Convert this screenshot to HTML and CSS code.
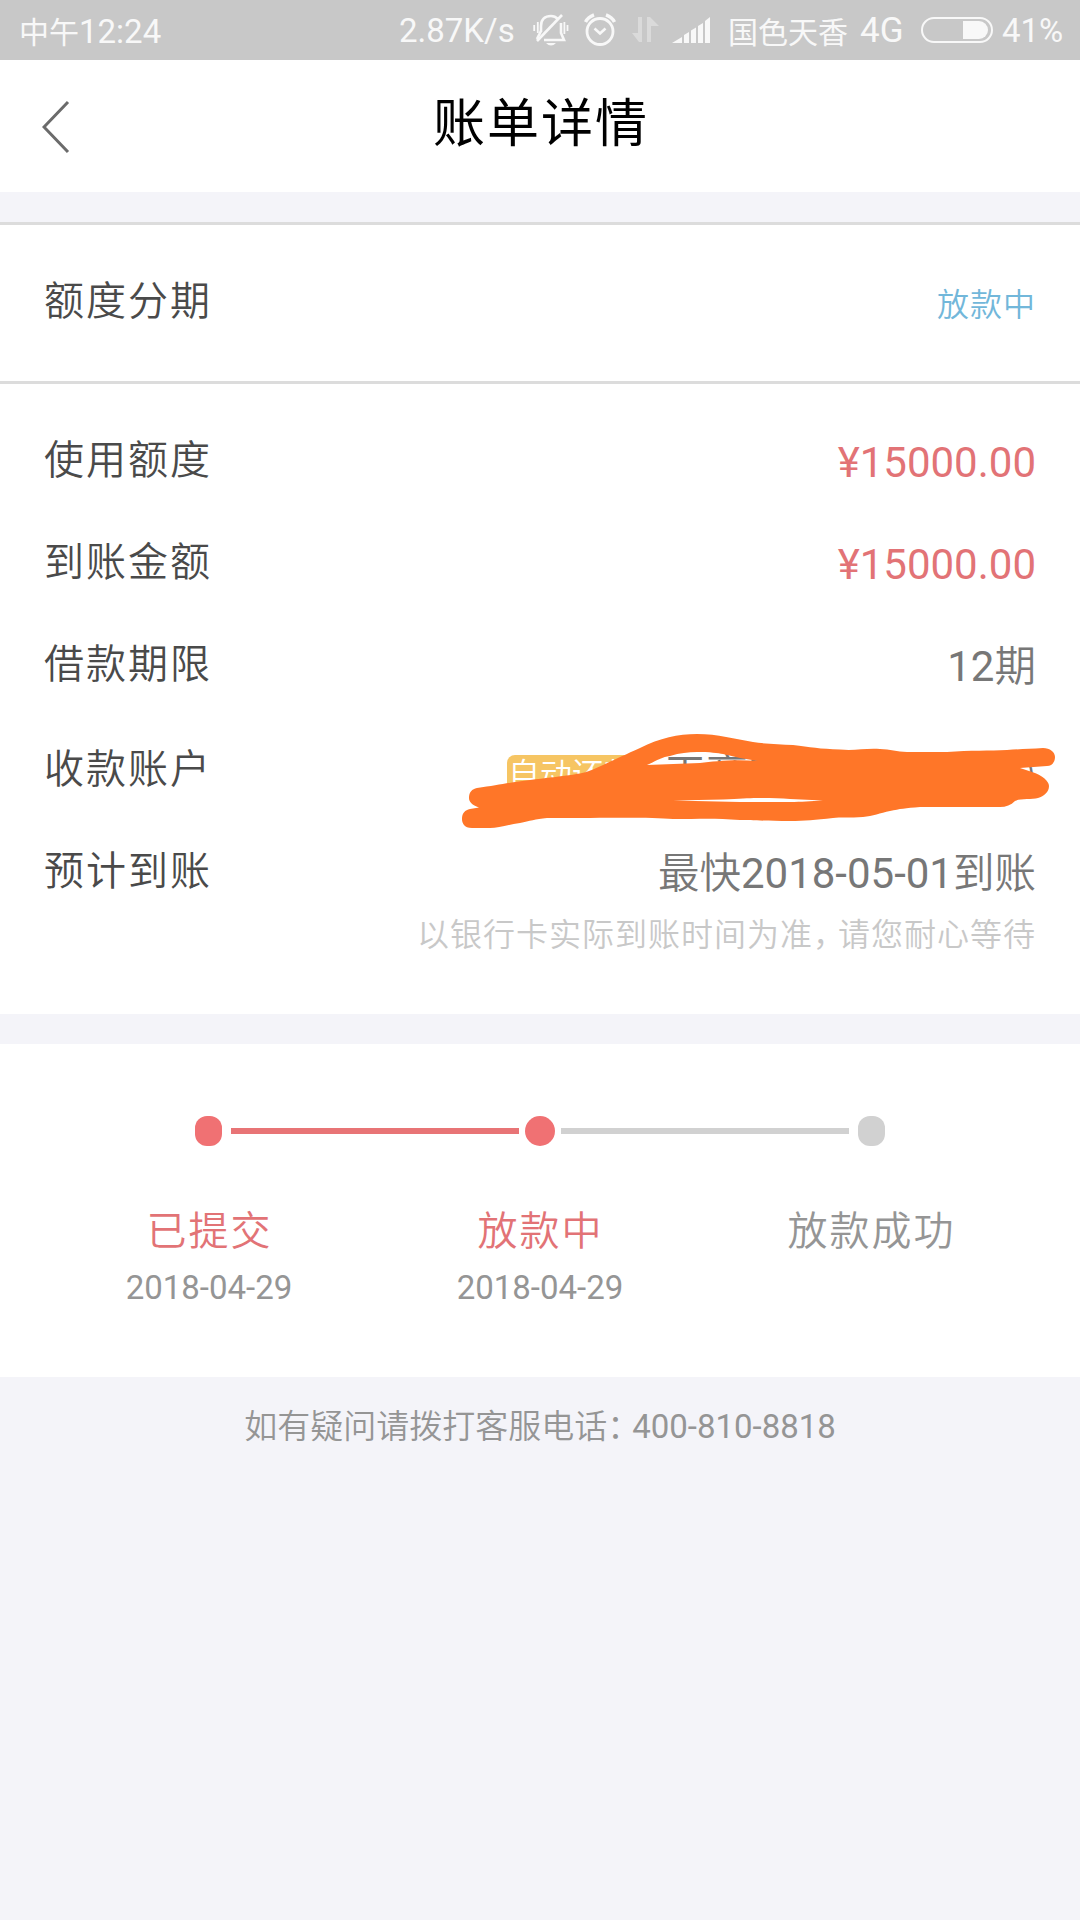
FILE: index.html
```
<!DOCTYPE html>
<html lang="zh-CN">
<head>
  <meta charset="UTF-8">
  <title>账单详情</title>
  <meta name="viewport" content="width=device-width, initial-scale=1.0">
  <link rel="stylesheet" href="styles.css">
</head>
<body>
  <div class="status-bar">
    <span class="time"><span class="cn">中午</span>12:24</span>
    <div class="status-icons">
      <span class="speed">2.87K/s</span>
      <svg class="icon-bell" width="36" height="34" viewBox="0 0 36 34" fill="none" stroke="#f8f8f8" stroke-width="2.6">
        <path d="M8 19V13C8 6 12 3 18 3C21 3 23 4 25 6"/>
        <path d="M28 10V20L31 27H11"/>
        <path d="M4 28L29 2" stroke-width="2.6"/>
        <path d="M8 18L4 26"/>
        <path d="M13 30H23Q18 35 13 30Z" fill="#f8f8f8" stroke="none"/>
        <path d="M1.2 12V18M4.8 9V20M34.5 12V18M31.4 9V21" stroke-width="1.8"/>
      </svg>
      <svg class="icon-alarm" width="32" height="34" viewBox="0 0 32 34" fill="none" stroke="#f8f8f8">
        <circle cx="16" cy="18.5" r="13" stroke-width="2.8"/>
        <path d="M10.5 15.5L16 20.5L21.5 15.5" stroke-width="2.6"/>
        <path d="M1.5 9Q4 4 10 1.8M30.5 9Q28 4 22 1.8" stroke-width="3.4"/>
      </svg>
      <svg class="icon-data" width="30" height="28" viewBox="0 0 30 28" fill="#dadada">
        <path d="M7 1H11V26H8L1 17H7Z"/>
        <path d="M16 26H20V10H28L19 1H16Z"/>
      </svg>
      <svg class="icon-signal" width="39" height="26" viewBox="0 0 39 26" fill="#f8f8f8">
        <path d="M0 26L10 20V26Z"/>
        <path d="M12 18L17 15V26H12Z"/>
        <path d="M19 13.5L24 10.5V26H19Z"/>
        <path d="M26 9L31 6V26H26Z"/>
        <path d="M33 4L38 0V26H33Z"/>
      </svg>
      <span class="carrier">国色天香</span>
      <span class="network">4G</span>
      <svg class="icon-battery" width="72" height="26" viewBox="0 0 72 26">
        <rect x="1" y="1" width="70" height="24" rx="12" fill="none" stroke="#f8f8f8" stroke-width="2"/>
        <path d="M42 4H58A9 9 0 0 1 58 22H42Z" fill="#f8f8f8"/>
      </svg>
      <span class="percent">41%</span>
    </div>
  </div>

  <div class="header">
    <svg class="back" width="28" height="54" viewBox="0 0 28 54" fill="none" stroke="#6b6b6b" stroke-width="3">
      <path d="M26 2L2 27L26 52"/>
    </svg>
    <h1>账单详情</h1>
  </div>

  <!-- Bill type -->
  <div class="bill-type">
    <span class="label">额度分期</span>
    <span class="state">放款中</span>
  </div>

  <!-- Bill details -->
  <div class="details">
    <div class="row">
      <span class="label">使用额度</span>
      <span class="value money">¥15000.00</span>
    </div>
    <div class="row">
      <span class="label">到账金额</span>
      <span class="value money">¥15000.00</span>
    </div>
    <div class="row">
      <span class="label">借款期限</span>
      <span class="value">12<span class="cn">期</span></span>
    </div>
    <div class="row account-row">
      <span class="label">收款账户</span>
      <div class="account">
        <span class="tag">自动还款</span>
        <span class="bank"><span>工商银行</span><span>)</span></span>
      </div>
      <svg class="scribble" width="600" height="108" viewBox="460 715 600 108">
        <path fill="#ff7628" fill-rule="evenodd" d="M477 788C500 785 512 782 530 780C560 776 582 775 594 769C610 762 622 756 640 748C660 738 678 734 697 734C718 734 735 739 753 742C765 744 780 744 793 745C810 747 820 749 840 749.5C855 751 865 748 880 749C890 749 897 752 907 752H947C970 750 990 751 1007 750C1020 749 1030 749 1043 748C1050 748 1055 752 1055 757C1055 762 1052 766 1047 766L1020 768L1032 772C1042 775 1049 781 1049 786C1049 792 1044 796 1038 798C1032 800 1020 798 1015 801C1011 805 1006 807 1000 807H920C905 808 900 809 890 811C880 813 873 816 863 817C850 818 840 817 833 818C815 820 805 821 790 821C765 821 750 820 740 820C715 818 700 819 673 819C650 817 610 818 547 818C535 819 530 821 520 823C507 825 498 828 490 828H472C464 828 462 823 462 819C462 813 465 810 470 809L479 807.5C472 805 469 802 469 798C469 792 472 789 477 788Z
        M647 765C656 761 662 757 670 756C680 753 688 752 697 752C710 752 718 753 723 754L740 758L758 761C735 759 715 761 700 763Z
        M673 800.5L723 799.5C740 799 748 798 757 798C770 798 780 798 790 799L823 800.5C810 801 802 802 790 802H740Z"/>
      </svg>
    </div>
    <div class="row arrival-row">
      <span class="label">预计到账</span>
      <span class="value"><span class="cn">最快</span>2018-05-01<span class="cn">到账</span></span>
    </div>
    <p class="note">以银行卡实际到账时间为准<span class="punct">，</span>请您耐心等待</p>
  </div>

  <!-- Progress -->
  <div class="progress">
    <div class="track">
      <span class="dot"></span>
      <span class="line"></span>
      <span class="dot current"></span>
      <span class="line todo"></span>
      <span class="dot todo"></span>
    </div>
    <div class="steps">
      <div class="step active">
        <h3>已提交</h3>
        <p>2018-04-29</p>
      </div>
      <div class="step active">
        <h3>放款中</h3>
        <p>2018-04-29</p>
      </div>
      <div class="step">
        <h3>放款成功</h3>
      </div>
    </div>
  </div>

  <p class="service">如有疑问请拨打客服电话<span class="punct">：</span><span class="phone">400-810-8818</span></p>
</body>
</html>
```

FILE: styles.css
```
/* Global Styles */
body {
  font-family: Roboto, "Noto Sans CJK SC", sans-serif;
  margin: 0;
  background-color: #f4f4f9;
  color: #777;
}
h1, h3, p {
  margin: 0;
  font-weight: normal;
}
span {
  white-space: nowrap;
}
svg {
  display: block;
  flex: none;
}
/* Status Bar */
.status-bar {
  display: flex;
  justify-content: space-between;
  align-items: center;
  box-sizing: border-box;
  height: 60px;
  padding-left: 19px;
  background-color: #c8c8c8;
  color: #f8f8f8;
  font-size: 33px;
}
.time .cn {
  font-size: 30px;
}
.status-icons {
  display: flex;
  align-items: center;
}
.speed {
  width: 134px;
}
.icon-alarm {
  margin-left: 15px;
}
.icon-data {
  margin-left: 15px;
}
.icon-signal {
  margin-left: 11px;
}
.carrier {
  width: 132px;
  margin-left: 17px;
  font-size: 30px;
}
.network {
  width: 61px;
  font-size: 35px;
}
.percent {
  width: 78px;
  margin-left: 9px;
}
/* Header */
.header {
  display: grid;
  grid-template-columns: 100px 1fr 100px;
  align-items: center;
  height: 132px;
  background-color: #fff;
}
.header h1 {
  padding: 0 0 13px 2px;
  text-align: center;
  font-size: 52px;
  letter-spacing: 2px;
  color: #000;
}
.back {
  margin: 2px 0 0 42px;
}
/* Bill Type */
.bill-type {
  display: flex;
  justify-content: space-between;
  align-items: center;
  height: 156px;
  margin-top: 30px;
  padding: 0 44px;
  background-color: #fff;
  border-top: 3px solid #dcdcdc;
  border-bottom: 3px solid #dcdcdc;
}
.label {
  font-size: 40px;
  font-weight: 350;
  letter-spacing: 2px;
  line-height: 50px;
  color: #4a4a4a;
}
.bill-type .label {
  padding-bottom: 2px;
}
.state {
  padding-bottom: 2px;
  font-size: 32px;
  font-weight: 350;
  letter-spacing: 1px;
  color: #72b7da;
}
/* Details */
.details {
  box-sizing: border-box;
  height: 630px;
  padding: 26px 44px 0;
  background-color: #fff;
}
.row {
  display: flex;
  justify-content: space-between;
  align-items: center;
  height: 102px;
}
.value {
  font-size: 42px;
  line-height: 50px;
  padding-top: 4px;
}
.value .cn {
  font-size: 41.5px;
  font-weight: 350;
}
.money {
  color: #e27376;
}
.account-row {
  position: relative;
  height: 108px;
}
.account {
  display: flex;
  align-items: center;
  width: 529px;
  padding-top: 8px;
}
.tag {
  padding: 2px 0 0 1px;
  border-radius: 8px;
  background-color: #f6c563;
  color: #fff;
  font-size: 32px;
  font-weight: 350;
  line-height: 36px;
}
.bank {
  display: flex;
  flex: 1;
  justify-content: space-between;
  margin-left: 28px;
  font-size: 42px;
  font-weight: 350;
  line-height: 50px;
}
/* marker strokes over the account number */
.scribble {
  position: absolute;
  top: -1px;
  right: -24px;
  overflow: visible;
}
.arrival-row {
  height: 96px;
}
.note {
  text-align: right;
  font-size: 32px;
  font-weight: 350;
  letter-spacing: 1px;
  line-height: 30px;
  color: #c8c8c8;
}
.punct {
  letter-spacing: -7px;
}
/* Progress */
.progress {
  box-sizing: border-box;
  height: 333px;
  margin-top: 30px;
  padding-top: 72px;
  background-color: #fff;
}
.track {
  display: flex;
  justify-content: center;
  align-items: center;
}
.dot {
  width: 27px;
  height: 30px;
  border-radius: 12px;
  background-color: #f07173;
}
.dot.current {
  width: 30px;
  border-radius: 50%;
}
.line {
  width: 288px;
  height: 6px;
  margin: 0 6px 0 9px;
  background-color: #e87476;
}
.line.todo {
  margin: 0 9px 0 6px;
}
.dot.todo, .line.todo {
  background-color: #d1d1d1;
}
.steps {
  display: flex;
  justify-content: center;
  margin-top: 60px;
}
.step {
  width: 331px;
  text-align: center;
  color: #959595;
}
.step h3 {
  padding-left: 1px;
  font-size: 40px;
  font-weight: 350;
  letter-spacing: 2px;
  line-height: 52px;
}
.step.active h3 {
  color: #e27376;
}
.step p {
  margin-top: 9px;
  font-size: 33px;
  line-height: 42px;
}
.service {
  margin-top: 25px;
  text-align: center;
  font-size: 33px;
  font-weight: 350;
  line-height: 50px;
  color: #959595;
}
.service .punct {
  letter-spacing: -8px;
}
.service .phone {
  font-weight: 400;
}
```
